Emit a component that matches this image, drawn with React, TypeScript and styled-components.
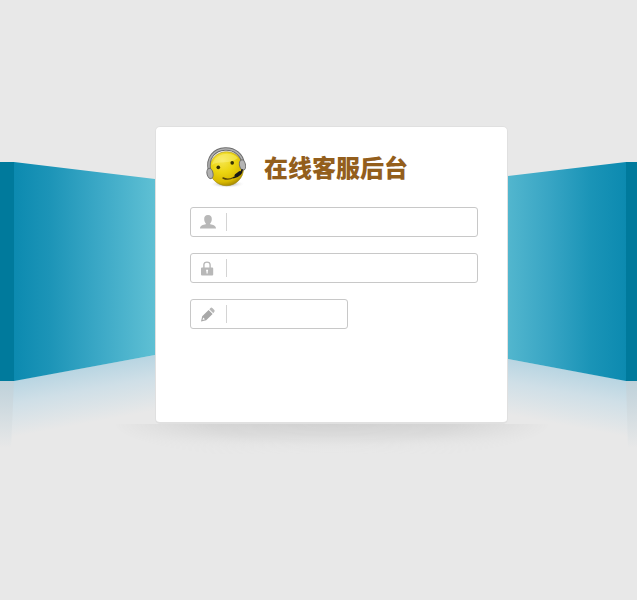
import React from "react";
import styled, { createGlobalStyle } from "styled-components";

const GlobalStyle = createGlobalStyle`
  *, *::before, *::after { box-sizing: border-box; }
  body {
    margin: 0;
    background: #e8e8e8;
    font-family: "Liberation Sans", "Noto Sans CJK SC", sans-serif;
  }
`;

const Page = styled.main`
  position: relative;
  display: grid;
  grid-template-columns: minmax(8px, 155fr) minmax(0, 353px) minmax(8px, 129fr);
  align-items: start;
  min-height: 100vh;
  padding: 126px 0 40px;
  overflow: hidden;
`;

const Scenery = styled.svg`
  position: absolute;
  top: 0;
  left: 0;
  width: 100%;
  height: 600px;
`;

const Card = styled.section`
  position: relative;
  grid-column: 2;
  min-height: 298px;
  padding: 19px 29px 40px 34px;
  background: #fff;
  border: 1px solid #e0e0e0;
  border-bottom: 2px solid #e0e0e0;
  border-radius: 5px;
`;

const Brand = styled.header`
  display: flex;
  align-items: center;
  gap: 18px;
  height: 42px;
  padding-left: 15px;
`;

const Title = styled.h1`
  margin: 0;
  color: #935e1c;
  font-family: "Noto Sans CJK SC", sans-serif;
  font-size: 24px;
  font-weight: 900;
  line-height: 32px;
  white-space: nowrap;
`;

const Form = styled.form`
  display: flex;
  flex-direction: column;
  gap: 16px;
  margin-top: 19px;
`;

const Field = styled.label<{ $short?: boolean }>`
  display: flex;
  align-items: center;
  width: ${(p) => (p.$short ? "55%" : "100%")};
  height: 30px;
  padding: 0 8px;
  background: #fff;
  border: 1px solid #c8c8c8;
  border-radius: 3px;
`;

const FieldIcon = styled.svg`
  flex: none;
  width: 18px;
  height: 18px;
  fill: #b8b8b8;
`;

const TextInput = styled.input`
  flex: 1;
  min-width: 0;
  height: 18px;
  margin-left: 9px;
  padding: 0 8px;
  border: 0;
  border-left: 1px solid #d4d4d4;
  outline: 0;
  background: transparent;
  color: #555;
  font: 12px/18px "Liberation Sans", "Noto Sans CJK SC", sans-serif;
`;

function Background() {
  return (
    <Scenery viewBox="0 0 637 600" preserveAspectRatio="none" aria-hidden="true">
      <defs>
        <linearGradient id="leftWall" gradientUnits="userSpaceOnUse" x1="14" y1="0" x2="155" y2="0">
          <stop offset="0" stopColor="#0c8ab0" />
          <stop offset="0.25" stopColor="#1c94b7" />
          <stop offset="0.6" stopColor="#3ba8c6" />
          <stop offset="1" stopColor="#5fc0d4" />
        </linearGradient>
        <linearGradient id="rightWall" gradientUnits="userSpaceOnUse" x1="508" y1="0" x2="626" y2="0">
          <stop offset="0" stopColor="#52b6ce" />
          <stop offset="0.35" stopColor="#38a5c4" />
          <stop offset="0.7" stopColor="#1a94b7" />
          <stop offset="1" stopColor="#0c8ab0" />
        </linearGradient>
        <linearGradient id="leftGlow" gradientUnits="userSpaceOnUse" x1="84" y1="368" x2="94" y2="422">
          <stop offset="0" stopColor="#b8d5e2" />
          <stop offset="0.4" stopColor="#cfdfe7" />
          <stop offset="1" stopColor="#e8e8e8" />
        </linearGradient>
        <linearGradient id="rightGlow" gradientUnits="userSpaceOnUse" x1="567" y1="370" x2="557" y2="424">
          <stop offset="0" stopColor="#b8d5e2" />
          <stop offset="0.4" stopColor="#cfdfe7" />
          <stop offset="1" stopColor="#e8e8e8" />
        </linearGradient>
        <linearGradient id="edgeGlow" gradientUnits="userSpaceOnUse" x1="0" y1="381" x2="0" y2="448">
          <stop offset="0" stopColor="#bed1da" />
          <stop offset="1" stopColor="#e8e8e8" />
        </linearGradient>
        <linearGradient id="shadeDown" x1="0" y1="0" x2="0" y2="1">
          <stop offset="0" stopColor="#d1d1d1" />
          <stop offset="0.35" stopColor="#d9d9d9" />
          <stop offset="0.7" stopColor="#e4e4e4" />
          <stop offset="1" stopColor="#e8e8e8" />
        </linearGradient>
        <radialGradient id="shadeSpread" cx="0.5" cy="0" r="1" gradientTransform="translate(0.25 0) scale(0.5 1)">
          <stop offset="0" stopColor="#fff" />
          <stop offset="0.55" stopColor="#fff" stopOpacity="0.85" />
          <stop offset="0.8" stopColor="#fff" stopOpacity="0.4" />
          <stop offset="1" stopColor="#fff" stopOpacity="0" />
        </radialGradient>
        <mask id="shadeMask" maskUnits="userSpaceOnUse" x="115" y="424" width="434" height="36">
          <rect x="115" y="424" width="434" height="36" fill="url(#shadeSpread)" />
        </mask>
      </defs>
      <path d="M12 381 155 355V450H12Z" fill="url(#leftGlow)" />
      <path d="M508 359 628 381V450H508Z" fill="url(#rightGlow)" />
      <path d="M0 381H14L11 450H0ZM626 381H637V450H628Z" fill="url(#edgeGlow)" />
      <path d="M0 162H14V381H0ZM626 162H637V381H626Z" fill="#007a9c" />
      <path d="M14 162 155 179V355L14 381Z" fill="url(#leftWall)" />
      <path d="M508 176 626 162V381L508 359Z" fill="url(#rightWall)" />
      <rect x="115" y="424" width="434" height="30" fill="url(#shadeDown)" mask="url(#shadeMask)" />
    </Scenery>
  );
}

function HeadsetSmiley() {
  return (
    <svg width="41" height="42" viewBox="0 0 41 42" aria-hidden="true">
      <defs>
        <radialGradient id="face" cx="0.38" cy="0.25" r="0.8">
          <stop offset="0" stopColor="#f6e650" />
          <stop offset="0.45" stopColor="#ecd510" />
          <stop offset="0.8" stopColor="#d9b900" />
          <stop offset="1" stopColor="#9d8100" />
        </radialGradient>
        <radialGradient id="faceShade">
          <stop offset="0" stopColor="#777" />
          <stop offset="1" stopColor="#fff" stopOpacity="0" />
        </radialGradient>
      </defs>
      <ellipse cx="22" cy="38" rx="18" ry="4" fill="url(#faceShade)" />
      <circle cx="21.5" cy="22.7" r="17" fill="url(#face)" stroke="#a18a12" strokeWidth="0.6" />
      <path d="M7 19C9 8 25 4 33 12 25 19 14 14 7 19Z" fill="#fff8a4" opacity="0.35" />
      <path d="M4.5 25C1.5 11 10 3.5 20 3 30 2.5 37 9 38 17" fill="none" stroke="#6c6c6c" strokeWidth="3.4" />
      <path d="M4.5 25C1.5 11 10 3.5 20 3 30 2.5 37 9 38 17" fill="none" stroke="#b0b0b0" strokeWidth="1.6" />
      <ellipse cx="5" cy="27.5" rx="3" ry="5.2" fill="#b0b0b0" stroke="#707070" transform="rotate(-12 5 27.5)" />
      <ellipse cx="37.5" cy="19" rx="3" ry="5.2" fill="#b5b5b5" stroke="#707070" transform="rotate(-12 37.5 19)" />
      <ellipse cx="13.3" cy="21.3" rx="1.8" ry="1.9" fill="#342e06" />
      <ellipse cx="27.2" cy="16.8" rx="1.8" ry="1.9" fill="#342e06" />
      <path d="M18 32Q23 34.5 28.5 31.5" fill="none" stroke="#54430a" strokeWidth="1.4" strokeLinecap="round" />
      <path d="M37 24C36.5 28 33 30.5 29 31.5" fill="none" stroke="#181818" strokeWidth="1.8" strokeLinecap="round" />
      <path d="M35 26.5 31 29.5" stroke="#181818" strokeWidth="3" strokeLinecap="round" />
    </svg>
  );
}

export default function App() {
  return (
    <>
      <GlobalStyle />
      <Page>
        <Background />
        <Card>
          <Brand>
            <HeadsetSmiley />
            <Title>在线客服后台</Title>
          </Brand>
          <Form>
            <Field>
              <FieldIcon viewBox="0 0 18 18" aria-hidden="true">
                <path d="M9 2C6.3 2 5 3.7 5.2 6.2 5.3 8.3 6 9.5 6.8 10.2V11.3C4 12 1 12.6 1 15.4H17C17 12.6 14 12 11.2 11.3V10.2C12 9.5 12.7 8.3 12.8 6.2 13 3.7 11.7 2 9 2Z" />
              </FieldIcon>
              <TextInput type="text" name="user" aria-label="用户名" />
            </Field>
            <Field>
              <FieldIcon viewBox="0 0 18 18" aria-hidden="true">
                <path d="M4.2 9V5.8C4.2 3.6 5.6 2.4 8 2.4S11.8 3.6 11.8 5.8V9H10.4V5.9C10.4 4.5 9.5 3.8 8 3.8S5.6 4.5 5.6 5.9V9Z" />
                <path fillRule="evenodd" d="M3 8.5H13.2Q14.2 8.5 14.2 9.5V15.4Q14.2 16.4 13.2 16.4H3Q2 16.4 2 15.4V9.5Q2 8.5 3 8.5ZM8 10.5A1.2 1.2 0 0 0 7.5 12.6V14.5H8.7V12.6A1.2 1.2 0 0 0 8 10.5Z" />
              </FieldIcon>
              <TextInput type="password" name="password" aria-label="密码" />
            </Field>
            <Field $short>
              <FieldIcon viewBox="0 0 18 18" aria-hidden="true">
                <path fillRule="evenodd" fill="#a8a8a8" d="M2 16.5 3.2 11.3 9.6 4.9 13.6 8.9 7.2 15.3ZM3.5 14.9 6 14.3 4.2 12.5Z" />
                <path d="M10.3 4.2 11.5 3Q12.4 2.1 13.3 3L15.3 5Q16.2 5.9 15.3 6.8L14.3 8.2Z" />
              </FieldIcon>
              <TextInput type="text" name="code" aria-label="验证码" autoComplete="off" />
            </Field>
          </Form>
        </Card>
      </Page>
    </>
  );
}
